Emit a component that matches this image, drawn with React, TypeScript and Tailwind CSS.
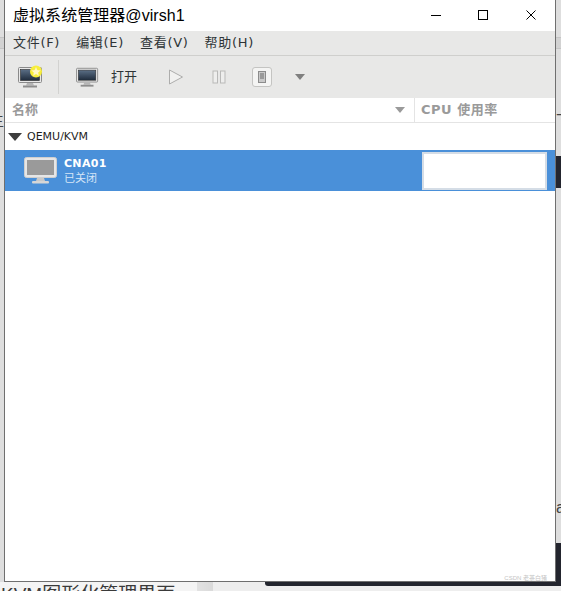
import React from "react";

const cjk = "font-['Liberation_Sans','Noto_Sans_CJK_SC',sans-serif]";
const dejavu = "font-['DejaVu_Sans','Noto_Sans_CJK_SC',sans-serif]";

const Monitor: React.FC<{ star?: boolean; className?: string }> = ({ star, className }) => (
  <svg viewBox="0 0 26 24" className={className}>
    <defs>
      <linearGradient id={star ? "scrA" : "scrB"} x1="0" y1="0" x2="0" y2="1">
        <stop offset="0" stopColor="#5b6f86" />
        <stop offset="1" stopColor="#1f2c3c" />
      </linearGradient>
    </defs>
    <rect x="0.5" y="2.5" width="23" height="15" rx="1" fill="#e8e8e8" stroke="#8a8a8a" />
    <rect x="2.5" y="4.5" width="19" height="11" fill={`url(#${star ? "scrA" : "scrB"})`} stroke="#2c2c2c" strokeWidth="0.6" />
    <path d="M9 18h6l1 2.5H8z" fill="#b5b5b5" />
    <rect x="5" y="20.5" width="14" height="2" fill="#8d8d8d" />
    {star && (
      <>
        <circle cx="18" cy="6.5" r="6" fill="#f8ef3a" />
        <path d="M18 1.5l1.5 3.4 3.6.3-2.7 2.4.8 3.6-3.2-1.9-3.2 1.9.8-3.6-2.7-2.4 3.6-.3z" fill="#fff8c8" stroke="#f3e63a" strokeWidth="0.4" />
      </>
    )}
  </svg>
);

const menus = ["文件(F)", "编辑(E)", "查看(V)", "帮助(H)"];

export default function App() {
  return (
    <div className={`flex h-[591px] w-[561px] flex-col overflow-hidden bg-[#eeeeee] ${cjk}`}>
      <div className="flex h-[582px] shrink-0 items-stretch">
        {/* page behind the window, left edge */}
        <div className="flex w-[4px] shrink-0 flex-col bg-[#dedede]">
          <div className="h-[37px] shrink-0" />
          <div className="h-[12px] shrink-0 border-y border-[#c4c4c4] bg-[#d2d2d2]" />
          <div className="h-[64px] shrink-0" />
          <div className="flex h-[16px] shrink-0 justify-end overflow-hidden text-[15px] leading-[16px] text-[#444444]">
            <span className="shrink-0">主</span>
          </div>
        </div>

        <div className="flex h-[582px] w-[552px] shrink-0 flex-col border-x border-b border-[#6f6f6f] bg-white">
          {/* Title bar */}
          <div className="flex h-[31px] shrink-0 items-center justify-between pl-[8px] pr-[4px]">
            <span className="text-[16px] leading-none tracking-[0.05px] text-black">虚拟系统管理器@virsh1</span>
            <svg viewBox="0 0 120 13" className="h-[13px] w-[120px]">
              <path d="M0 6.5h10" stroke="#000" strokeWidth="1" />
              <rect x="47.5" y="1.5" width="9" height="9" fill="none" stroke="#000" />
              <path d="M95.5 1.5l9 9M104.5 1.5l-9 9" stroke="#000" strokeWidth="1" />
            </svg>
          </div>

          {/* Menu bar */}
          <div className={`flex h-[25px] shrink-0 items-center gap-[16px] border-b border-[#cfcfcd] bg-[#e8e8e7] pl-[8px] text-[13px] tracking-[0.7px] text-[#2e3436] ${dejavu}`}>
            {menus.map(m => (
              <span key={m}>{m}</span>
            ))}
          </div>

          {/* Toolbar */}
          <div className="flex h-[42px] shrink-0 items-center bg-[#e8e8e7] pl-[13px]">
            <Monitor star className="h-[24px] w-[26px]" />
            <div className="ml-[14px] h-[34px] w-px bg-[#d2d2d0]" />
            <Monitor className="ml-[17px] h-[22px] w-[24px]" />
            <span className="ml-[11px] text-[13px] text-[#2e3436]">打开</span>
            <svg viewBox="0 0 16 16" className="ml-[31px] h-[16px] w-[16px]">
              <path d="M1.5 1l13 7-13 7z" fill="#f1f1f0" stroke="#adadac" />
            </svg>
            <svg viewBox="0 0 14 14" className="ml-[28px] h-[14px] w-[14px]">
              <rect x="1" y="1" width="4.5" height="12" fill="#eeeeed" stroke="#b9b9b8" />
              <rect x="8.5" y="1" width="4.5" height="12" fill="#eeeeed" stroke="#b9b9b8" />
            </svg>
            <span className="ml-[26px] flex h-[20px] w-[20px] items-center justify-center rounded-[3px] border border-[#c4c4c2] bg-[#f4f4f3]">
              <span className="flex h-[12px] w-[8px] items-start justify-center border border-[#8c8c8c] bg-[#c9c9c9]">
                <span className="mt-[1px] h-[6px] w-[4px] bg-[#9a9a9a]" />
              </span>
            </span>
            <svg viewBox="0 0 10 6" className="ml-[23px] h-[6px] w-[10px]">
              <path d="M0 0h10L5 6z" fill="#7f7f7f" />
            </svg>
          </div>

          {/* Column headers */}
          <div className={`flex h-[25px] shrink-0 border-b border-[#e4e4e4] text-[13px] font-bold text-[#9a9a9a] ${dejavu}`}>
            <div className="flex w-[410px] items-center justify-between border-r border-[#e4e4e4] pl-[7px] pr-[9px]">
              <span>名称</span>
              <svg viewBox="0 0 10 6" className="h-[6px] w-[10px]">
                <path d="M0 0h10L5 6z" fill="#9a9a9a" />
              </svg>
            </div>
            <div className="flex flex-1 items-center pl-[6px]">
              <span className="tracking-[0.5px]">CPU 使用率</span>
            </div>
          </div>

          {/* Group row */}
          <div className={`flex h-[27px] shrink-0 items-center pl-[3px] pt-[1px] text-[11px] text-[#1f1f1f] ${dejavu}`}>
            <svg viewBox="0 0 14 8" className="h-[8px] w-[14px]">
              <path d="M0 0h14L7 8z" fill="#3d3d3d" />
            </svg>
            <span className="ml-[5px]">QEMU/KVM</span>
          </div>

          {/* VM row */}
          <div className="flex h-[41px] shrink-0 items-center bg-[#4a90d9] pl-[19px] pr-[8px] text-white">
            <svg viewBox="0 0 33 27" className="h-[27px] w-[33px]">
              <rect x="0.5" y="0.5" width="32" height="20" rx="2" fill="#e6e6e6" stroke="#cfcfcf" />
              <rect x="3" y="3" width="27" height="15" fill="#9a9a9a" />
              <path d="M13 21h7l1 3h-9z" fill="#c9c9c9" />
              <rect x="8" y="24" width="17" height="2.5" rx="1" fill="#d6d6d6" />
            </svg>
            <div className="ml-[7px] flex flex-col">
              <span className={`text-[11px] font-bold leading-[14px] tracking-[0.3px] ${dejavu}`}>CNA01</span>
              <span className="text-[11px] leading-[14px] text-[#d6e6f7]">已关闭</span>
            </div>
            <div className="ml-auto h-[38px] w-[125px] border-2 border-[#d5dde6] bg-white" />
          </div>

          <div className="relative flex-1 bg-white">
            {/* watermark over the corner of the window */}
            <span className="absolute bottom-[-1px] right-[8px] text-[6px] leading-[7px] text-[#c4c4c4]">CSDN 老茶白猪</span>
          </div>
        </div>

        {/* page behind the window, right edge */}
        <div className="flex w-[5px] shrink-0 flex-col bg-[#dedede]">
          <div className="h-[37px] shrink-0" />
          <div className="h-[12px] shrink-0 border-y border-[#c4c4c4] bg-[#d2d2d2]" />
          <div className="h-[64px] shrink-0" />
          <div className="flex h-[16px] shrink-0 overflow-hidden text-[15px] leading-[16px] text-[#444444]">
            <span className="shrink-0">下</span>
          </div>
          <div className="h-[27px] shrink-0" />
          <div className="h-[32px] shrink-0 bg-[#23252e]" />
          <div className="flex h-[355px] shrink-0 items-end overflow-hidden pb-[26px] text-[16px] leading-[18px] text-[#444444]">
            <span className="shrink-0">a</span>
          </div>
          <div className="flex-1 bg-[#23252e]" />
        </div>
      </div>

      {/* page behind the window, bottom edge */}
      <div className="relative flex-1 overflow-hidden">
        <div className="flex h-full">
          <div className="w-[197px] shrink-0 bg-[#f4f4f4] pl-[1px] pt-[2px]">
            <span className="block whitespace-nowrap text-[19px] leading-[22px] text-[#3a3a3a]">KVM图形化管理界面</span>
          </div>
          <div className="w-[16px] shrink-0 bg-gradient-to-r from-[#e2e2e2] to-[#dadada]" />
          <div className="flex-1 bg-[#eeeeee]" />
        </div>
        <div className="absolute left-[265px] right-0 top-0 h-[4px] rounded-bl-[3px] bg-[#23252e]" />
      </div>
    </div>
  );
}
